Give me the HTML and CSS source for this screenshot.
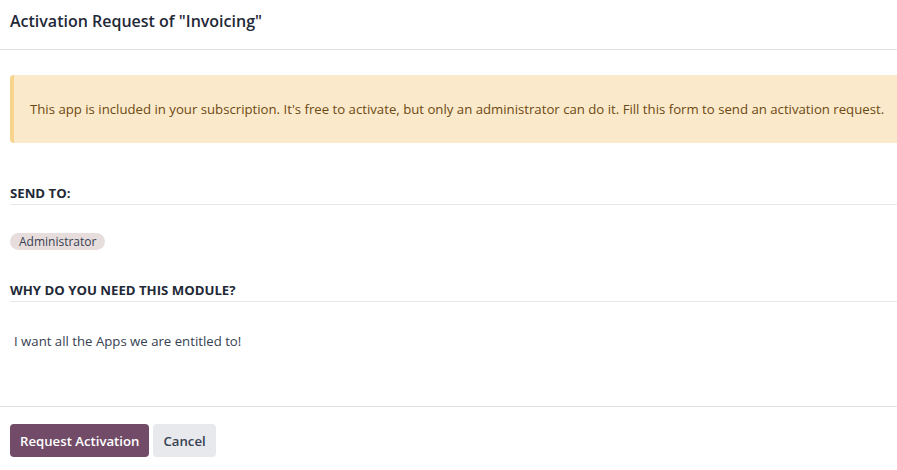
FILE: index.html
```html
<!DOCTYPE html>
<html lang="en">
<head>
    <meta charset="UTF-8">
    <title>Activation Request</title>
    <link rel="stylesheet" href="styles.css">
</head>
<body>
    <div class="modal">
        <header class="modal-header">
            <h4 class="modal-title">Activation Request of "Invoicing"</h4>
        </header>
        <main class="modal-body">
            <div class="alert">
                This app is included in your subscription. It's free to activate, but only an administrator can do it. Fill this form to send an activation request.
            </div>
            <div class="separator sep-first">SEND TO:</div>
            <div class="tags">
                <span class="badge">Administrator</span>
            </div>
            <div class="separator sep-second">WHY DO YOU NEED THIS MODULE?</div>
            <div class="reason">I want all the Apps we are entitled to!</div>
        </main>
        <footer class="modal-footer">
            <button class="btn btn-primary">Request Activation</button>
            <button class="btn btn-secondary">Cancel</button>
        </footer>
    </div>
</body>
</html>
```

FILE: styles.css
```css
body {
    margin: 0;
    font-family: "Open Sans", "Noto Sans", sans-serif;
    font-size: 13.2px;
    line-height: 19px;
    color: #374151;
    background: #fff;
}
.modal {
    width: 897px;
    overflow: hidden;
}
.modal-header {
    height: 50px;
    border-bottom: 1px solid #dee2e6;
    box-sizing: border-box;
    display: flex;
    align-items: center;
    padding: 0 10px 6px;
}
.modal-title {
    margin: 0;
    font-size: 16px;
    font-weight: 600;
    color: #1f2937;
}
.modal-body {
    padding: 25px 0 0 10px;
    height: 357px;
    box-sizing: border-box;
    border-bottom: 1px solid #dee2e6;
}
.alert {
    background: #fbe9cb;
    border-left: 4px solid #f6d48e;
    border-radius: 4px 0 0 4px;
    color: #6c4a13;
    height: 68px;
    box-sizing: border-box;
    display: flex;
    align-items: center;
    padding-left: 16px;
    margin-right: -10px;
    white-space: nowrap;
}
.separator {
    font-weight: 700;
    color: #1f2937;
    padding-bottom: 1px;
    border-bottom: 1px solid #e5e7eb;
}
.sep-first {
    margin-top: 41px;
}
.sep-second {
    margin-top: 31px;
}
.tags {
    margin-top: 28px;
    line-height: 15px;
}
.badge {
    display: inline-block;
    background: #e7dddd;
    border-radius: 9px;
    padding: 1px 9px;
    font-size: 12px;
    font-weight: 500;
    color: #374151;
}
.reason {
    margin-top: 29px;
    padding-left: 4px;
    line-height: 20px;
}
.modal-footer {
    display: flex;
    gap: 4px;
    padding: 17px 10px;
}
.btn {
    font-family: inherit;
    font-size: 13.2px;
    font-weight: 600;
    border: none;
    border-radius: 4px;
    height: 33px;
    padding: 0 10px;
    cursor: pointer;
}
.btn-primary {
    background: #714b67;
    color: #fff;
}
.btn-secondary {
    background: #e7e9ed;
    color: #374151;
}
```
